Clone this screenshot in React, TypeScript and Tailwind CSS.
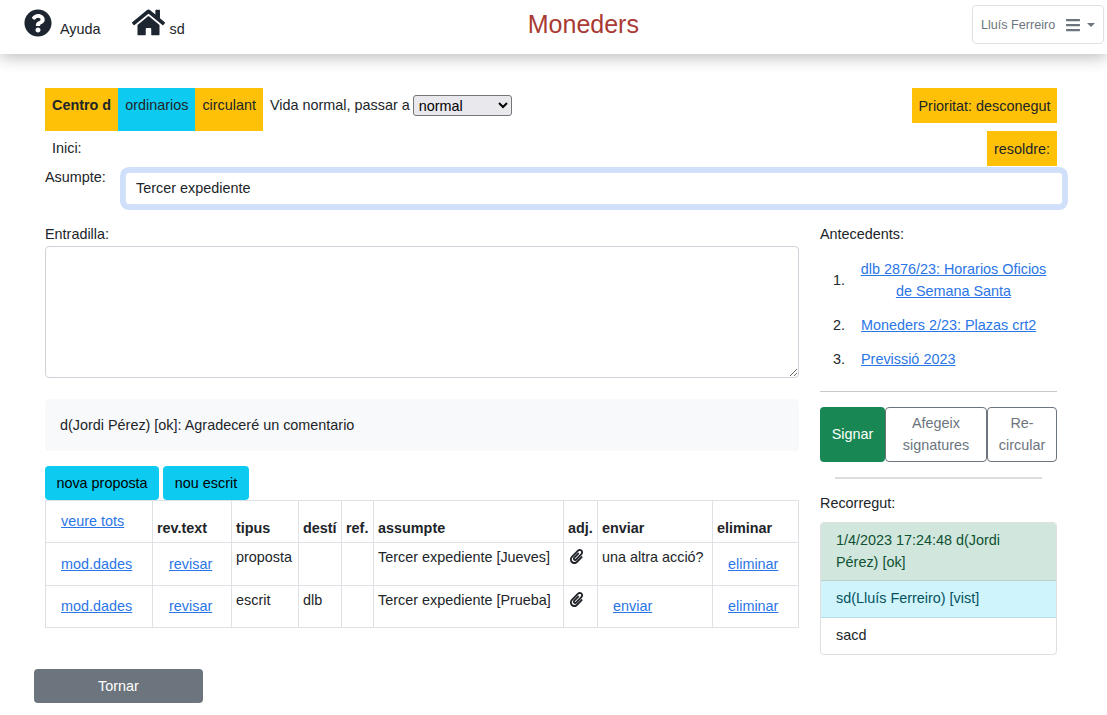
import { FaBars, FaHome, FaPaperclip, FaQuestionCircle } from "react-icons/fa";

const font = "font-['Liberation_Sans',Arial,sans-serif]";
const linkCls = "text-[#2b76e6] underline";

const antecedents = [
  { n: "1.", text: "dlb 2876/23: Horarios Oficios de Semana Santa", h: "h-[44px]" },
  { n: "2.", text: "Moneders 2/23: Plazas crt2", h: "h-[22px]" },
  { n: "3.", text: "Previssió 2023", h: "h-[22px]" },
];

const rows = [
  { tipus: "proposta", desti: "", assumpte: "Tercer expediente [Jueves]", enviar: "una altra acció?", link: false, rowH: "h-[43px]", cellPb: "" },
  { tipus: "escrit", desti: "dlb", assumpte: "Tercer expediente [Prueba]", enviar: "enviar", link: true, rowH: "h-[42px]", cellPb: "pb-[1px]" },
];

const th = "border border-[#dee2e6] px-[4px] pt-[8px] pb-[3px] align-bottom text-left font-bold";
const td = "border border-[#dee2e6] px-[4px] pt-[3px] align-top";
const tdLink = "border border-[#dee2e6] align-middle";

export default function App() {
  return (
    <div className={`${font} h-[715px] w-[1107px] overflow-hidden bg-white text-[14.4px] leading-[22px] text-[#212529]`}>
      <header className="flex h-[54px] items-start shadow-[0_2px_16px_rgba(0,0,0,0.3)]">
        <div className="flex w-[972px] items-start">
          <a className="ml-[24px] flex items-start">
            <FaQuestionCircle className="mt-[9px] text-[28px] text-[#1c2530]" />
            <span className="ml-[8px] mt-[18px]">Ayuda</span>
          </a>
          <a className="ml-[31px] flex items-start">
            <FaHome className="mt-[6px] text-[33px] text-[#1c2530]" />
            <span className="ml-[5px] mt-[18px]">sd</span>
          </a>
          <h1 className="ml-[343px] mt-[9px] text-[25px] leading-[30px] text-[#a93a33]">Moneders</h1>
        </div>
        <button className="mt-[5px] flex h-[39px] w-[132px] items-center rounded-[4px] border border-[#dee2e6] pl-[8px] text-[12.6px] text-[#6c757d]">
          Lluís Ferreiro
          <FaBars className="ml-[10px] text-[16px] text-[#6c757d]" />
          <span className="ml-[6px] h-0 w-0 border-x-[4px] border-t-[4px] border-x-transparent border-t-[#6c757d]" />
        </button>
      </header>

      <main className="pl-[45px] pt-[34px]">
        <div className="flex w-[1012px] items-start">
          <span className="h-[43px] bg-[#ffc107] px-[7px] pt-[6px] font-bold">Centro d</span>
          <span className="h-[43px] bg-[#0dcaf0] px-[7px] pt-[6px]">ordinarios</span>
          <span className="h-[43px] bg-[#ffc107] px-[7px] pt-[6px]">circulant</span>
          <span className="ml-[7px] mt-[6px]">Vida normal, passar a</span>
          <select className="ml-[3px] mt-[7px] h-[21px] w-[99px] rounded-[3px] border border-[#767676] bg-[#e9e9ed] pl-[1px] text-[14.4px] leading-[18px] text-black">
            <option>normal</option>
          </select>
          <span className="ml-auto flex h-[35px] w-[145px] items-center justify-center whitespace-nowrap bg-[#ffc107]">Prioritat: desconegut</span>
        </div>

        <div className="flex h-[35px] w-[1012px] items-start justify-between">
          <span className="ml-[7px] mt-[6px]">Inici:</span>
          <span className="flex h-[35px] items-center bg-[#ffc107] px-[7px]">resoldre:</span>
        </div>

        <div className="flex items-start">
          <label className="w-[80px]">Asumpte:</label>
          <div className="mt-[6px] flex h-[33px] w-[938px] items-center rounded-[4px] border border-[#d5e3fa] bg-white pb-[1px] pl-[10px] shadow-[0_0_0_5px_#d0e0fa]">
            Tercer expediente
          </div>
        </div>

        <div className="mt-[18px] flex items-start">
          <div className="w-[754px]">
            <label className="block">Entradilla:</label>
            <textarea className="mt-[1px] block h-[132px] w-[754px] rounded-[4px] border border-[#ced4da]" />
            <div className="mt-[21px] flex h-[52px] items-center rounded-[4px] bg-[#f8f9fa] pl-[15px]">
              d(Jordi Pérez) [ok]: Agradeceré un comentario
            </div>
            <div className="mt-[15px] flex gap-[4px]">
              <button className="h-[34px] w-[114px] rounded-[4px] bg-[#0dcaf0] text-black">nova proposta</button>
              <button className="h-[34px] w-[86px] rounded-[4px] bg-[#0dcaf0] text-black">nou escrit</button>
            </div>
            <table className="w-[753px] table-fixed border-collapse">
              <colgroup>
                <col className="w-[107px]" />
                <col className="w-[79px]" />
                <col className="w-[67px]" />
                <col className="w-[43px]" />
                <col className="w-[32px]" />
                <col className="w-[190px]" />
                <col className="w-[34px]" />
                <col className="w-[115px]" />
                <col className="w-[86px]" />
              </colgroup>
              <thead>
                <tr className="h-[42px]">
                  <td className="border border-[#dee2e6] pb-[10px] pl-[15px] align-bottom">
                    <a className={linkCls}>veure tots</a>
                  </td>
                  <th className={th}>rev.text</th>
                  <th className={th}>tipus</th>
                  <th className={th}>destí</th>
                  <th className={th}>ref.</th>
                  <th className={th}>assumpte</th>
                  <th className={th}>adj.</th>
                  <th className={th}>enviar</th>
                  <th className={th}>eliminar</th>
                </tr>
              </thead>
              <tbody>
                {rows.map((r) => (
                  <tr key={r.tipus} className={r.rowH}>
                    <td className={`${tdLink} pl-[15px] ${r.cellPb}`}>
                      <a className={linkCls}>mod.dades</a>
                    </td>
                    <td className={`${tdLink} pl-[16px] ${r.cellPb}`}>
                      <a className={linkCls}>revisar</a>
                    </td>
                    <td className={td}>{r.tipus}</td>
                    <td className={td}>{r.desti}</td>
                    <td className={td}></td>
                    <td className={`${td} whitespace-nowrap`}>{r.assumpte}</td>
                    <td className={td}>
                      <FaPaperclip className="ml-[1px] mt-[3px] text-[15px] text-[#212529]" />
                    </td>
                    {r.link ? (
                      <td className={`${tdLink} pl-[15px] ${r.cellPb}`}>
                        <a className={linkCls}>{r.enviar}</a>
                      </td>
                    ) : (
                      <td className={`${td} whitespace-nowrap`}>{r.enviar}</td>
                    )}
                    <td className={`${tdLink} pl-[15px] ${r.cellPb}`}>
                      <a className={linkCls}>eliminar</a>
                    </td>
                  </tr>
                ))}
              </tbody>
            </table>
          </div>

          <aside className="ml-[21px] w-[237px]">
            <label className="block">Antecedents:</label>
            <ol className="mt-[13px] flex flex-col gap-[12px]">
              {antecedents.map((a) => (
                <li key={a.n} className={`flex items-center ${a.h}`}>
                  <span className={`ml-[13px] w-[28px] ${a.n === "1." ? "-mt-[1px]" : ""}`}>{a.n}</span>
                  <a className={`${linkCls} ${a.n === "1." ? "-ml-[1px] w-[187px] text-center" : ""}`}>{a.text}</a>
                </li>
              ))}
            </ol>
            <hr className="mt-[21px] border-[#c6c7c8]" />
            <div className="mt-[15px] flex h-[55px]">
              <button className="w-[65px] rounded-[4px] bg-[#198754] pb-[1px] text-white">Signar</button>
              <button className="w-[102px] rounded-[4px] border border-[#6c757d] pb-[2px] text-[#6c757d]">Afegeix signatures</button>
              <button className="w-[70px] rounded-[4px] border border-[#6c757d] px-[8px] pb-[2px] text-[#6c757d]">Re-circular</button>
            </div>
            <hr className="mx-[15px] mt-[15px] border-t-2 border-[#dcdddd]" />
            <label className="mt-[13px] block">Recorregut:</label>
            <ul className="mt-[8px] overflow-hidden rounded-[4px] border border-[#dfdfdf] leading-[21.6px]">
              <li className="border-b border-[#bcd0c7] bg-[#d1e7dd] px-[15px] py-[7px] text-[#0f5132]">1/4/2023 17:24:48 d(Jordi Pérez) [ok]</li>
              <li className="border-b border-[#b6dfe7] bg-[#cff4fc] px-[15px] py-[7px] text-[#055160]">sd(Lluís Ferreiro) [vist]</li>
              <li className="px-[15px] pb-[8px] pt-[7px]">sacd</li>
            </ul>
          </aside>
        </div>

        <button className="-ml-[11px] mt-[14px] h-[34px] w-[169px] rounded-[4px] bg-[#6c757d] text-white">Tornar</button>
      </main>
    </div>
  );
}
